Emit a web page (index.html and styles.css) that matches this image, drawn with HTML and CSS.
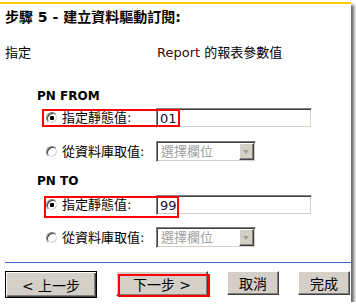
FILE: index.html
```html
<!DOCTYPE html>
<html lang="zh-Hant">
<head>
  <meta charset="UTF-8" />
  <title>建立資料驅動訂閱</title>
  <link rel="stylesheet" href="styles.css">
</head>
<body>
  <div class="panel">
    <h1 class="title">步驟 5 - 建立資料驅動訂閱:</h1>

    <div class="head-row">
      <span class="head-left">指定</span>
      <span><span class="rpt">Report</span> 的報表參數值</span>
    </div>

    <div class="param">
      <div class="param-name first">PN FROM</div>
      <div class="row row-static">
        <input class="radio" type="radio" name="from" checked>
        <span class="lbl">指定靜態值:</span>
        <input class="text" type="text" value="01">
        <span class="mark mark-1"></span>
      </div>
      <div class="row row-db">
        <input class="radio" type="radio" name="from">
        <span class="lbl">從資料庫取值:</span>
        <div class="combo"><span class="combo-text">選擇欄位</span><span class="combo-btn"></span></div>
      </div>
    </div>

    <div class="param">
      <div class="param-name">PN TO</div>
      <div class="row row-static row-to">
        <input class="radio" type="radio" name="to" checked>
        <span class="lbl">指定靜態值:</span>
        <input class="text" type="text" value="99">
        <span class="mark mark-2"></span>
      </div>
      <div class="row row-db">
        <input class="radio" type="radio" name="to">
        <span class="lbl">從資料庫取值:</span>
        <div class="combo"><span class="combo-text">選擇欄位</span><span class="combo-btn"></span></div>
      </div>
    </div>

    <div class="divider"></div>

    <div class="buttons">
      <button class="btn btn-wide btn-default">&lt; 上一步</button>
      <button class="btn btn-wide">下一步 &gt;<span class="mark mark-3"></span></button>
      <button class="btn btn-small">取消</button>
      <button class="btn btn-small">完成</button>
    </div>
  </div>
</body>
</html>
```

FILE: styles.css
```css
body {
  margin: 0;
  background: #fff;
  color: #000;
  font-family: "DejaVu Sans", "Noto Sans CJK TC", sans-serif;
  font-size: 13px;
  overflow: hidden;
}

.panel {
  width: 351px;
  height: 298px;
  margin-top: 2px;
  border-top: 2px solid #ffcc00;
  box-shadow: 3px 3px 3px rgba(0, 0, 0, 0.6);
}

.title {
  margin: 5px 0 0 5px;
  font-size: 14px;
  line-height: 16px;
  font-weight: bold;
}

.head-row {
  display: flex;
  margin: 20px 0 0 5px;
  line-height: 16px;
}
.head-left { width: 152px; }
.rpt { color: #3c0808; }

.param { padding-left: 5px; }

.param-name {
  margin: 11px 0 0 32px;
  font-size: 12px;
  font-weight: bold;
  line-height: 16px;
}
.param-name.first { margin-top: 27px; }

.row {
  position: relative;
  display: flex;
  align-items: center;
  height: 20px;
  margin-top: 6px;
}
.param-name.first + .row { margin-top: 4px; }
.row-db {
  height: 21px;
  margin-top: 13px;
}
.row-to + .row-db { margin-top: 12px; }

.radio {
  appearance: none;
  width: 12px;
  height: 12px;
  margin: 0 4px 0 41px;
  border: 1px solid;
  border-color: #808080 #fff #fff #808080;
  border-radius: 50%;
  box-shadow: inset 1px 1px #404040, inset -1px -1px #d4d0c8;
  background: #fff;
}
.radio:checked {
  background: radial-gradient(circle, #000 0 2px, #fff 2.5px);
}

.lbl {
  width: 94px;
  line-height: 16px;
}

.text {
  box-sizing: border-box;
  width: 156px;
  height: 20px;
  margin: 0;
  padding: 0 3px;
  border: 1px solid;
  border-color: #808080 #fff #fff #808080;
  box-shadow: inset 1px 1px #404040, inset -1px -1px #d4d0c8;
  font: 13px "DejaVu Sans", sans-serif;
  color: #1a0a40;
  outline: none;
}

.combo {
  box-sizing: border-box;
  display: flex;
  justify-content: space-between;
  align-items: center;
  width: 100px;
  height: 21px;
  border: 1px solid;
  border-color: #808080 #fff #fff #808080;
  box-shadow: inset 1px 1px #404040, inset -1px -1px #d4d0c8;
  background: #fff;
}
.combo-text {
  padding-left: 4px;
  color: #a0a0a0;
  line-height: 16px;
}
.combo-btn {
  position: relative;
  box-sizing: border-box;
  width: 15px;
  height: 17px;
  margin-right: 1px;
  background: #d4d0c8;
  border: 1px solid;
  border-color: #fff #404040 #404040 #fff;
  box-shadow: inset -1px -1px #808080;
}
.combo-btn::after {
  content: "";
  position: absolute;
  left: 3px;
  top: 6px;
  border: 3.5px solid transparent;
  border-top: 4px solid #a0a0a0;
  border-bottom: 0;
}

.mark {
  position: absolute;
  box-sizing: border-box;
  border: 2px solid #ff0000;
  pointer-events: none;
}
.mark-1 { left: 37px; top: 1px; width: 138px; height: 18px; }
.mark-2 { left: 39px; top: 1px; width: 135px; height: 22px; }
.mark-3 { left: 1px; top: 2px; width: 92px; height: 23px; }

.divider {
  height: 1px;
  margin: 14px 0 0 5px;
  background: #3a6cc4;
}

.buttons {
  display: flex;
  align-items: flex-start;
  gap: 19px;
  margin: 8px 0 0 5px;
}

.btn {
  position: relative;
  box-sizing: border-box;
  height: 25px;
  margin: 0;
  padding: 0;
  background: #d4d0c8;
  border: 1px solid;
  border-color: #fff #404040 #404040 #fff;
  box-shadow: inset -1px -1px #808080;
  font: 14px "DejaVu Sans", "Noto Sans CJK TC", sans-serif;
  color: #000;
}
.btn-wide { width: 92px; }
.btn-small { width: 52px; height: 24px; }
.btn-default {
  height: 27px;
  border: 1px solid #000;
  box-shadow: inset 1px 1px #fff, inset -1px -1px #404040, inset -2px -2px #808080;
}
```
